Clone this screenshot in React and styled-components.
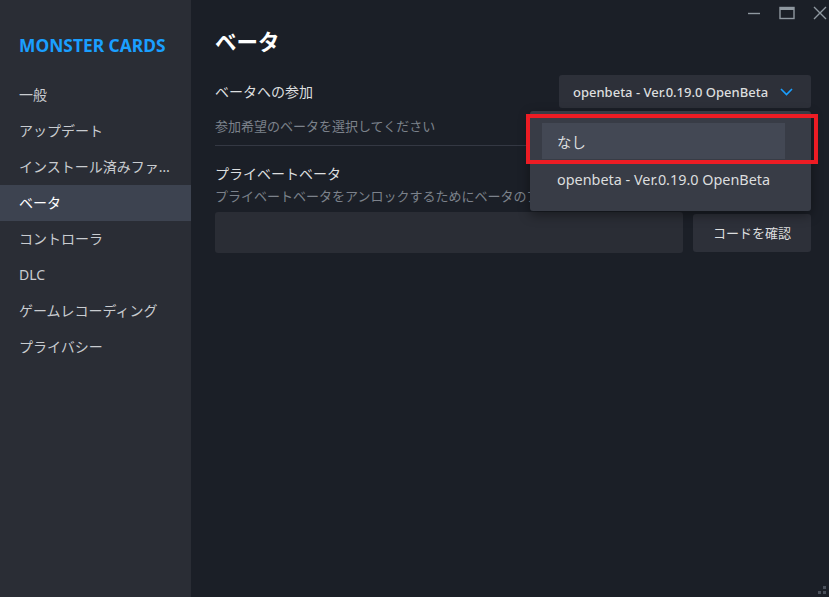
import styled, { createGlobalStyle } from "styled-components";

const GlobalStyle = createGlobalStyle`
  html, body { margin: 0; padding: 0; background: #1b1f27; }
  body {
    font-family: "Noto Sans", "Noto Sans CJK JP", sans-serif;
    -webkit-font-smoothing: antialiased;
  }
`;

const navItems = [
  "一般",
  "アップデート",
  "インストール済みファイル",
  "ベータ",
  "コントローラ",
  "DLC",
  "ゲームレコーディング",
  "プライバシー",
];

const App = () => {
  return (
    <>
      <GlobalStyle />
      <Window>
        <Sidebar>
          <GameTitle>MONSTER CARDS</GameTitle>
          <Nav>
            {navItems.map((item) => (
              <NavItem key={item} $active={item === "ベータ"}>
                {item}
              </NavItem>
            ))}
          </Nav>
        </Sidebar>
        <Main>
          <TitleBar>
            <WinButton aria-label="minimize">
              <svg width="14" height="14" viewBox="0 0 14 14">
                <path d="M1 7.5h12" stroke="#8f98a0" strokeWidth="1.4" />
              </svg>
            </WinButton>
            <WinButton aria-label="maximize">
              <svg width="16" height="14" viewBox="0 0 16 14">
                <rect x="1" y="1.5" width="14" height="11" fill="none" stroke="#8f98a0" strokeWidth="1.4" />
                <path d="M1 3h14" stroke="#8f98a0" strokeWidth="2" />
              </svg>
            </WinButton>
            <WinButton aria-label="close">
              <svg width="14" height="14" viewBox="0 0 14 14">
                <path d="M1 1l12 12M13 1L1 13" stroke="#8f98a0" strokeWidth="1.4" />
              </svg>
            </WinButton>
          </TitleBar>
          <Content>
            <Heading>ベータ</Heading>
            <Section>
              <FieldRow>
                <Label>ベータへの参加</Label>
                <DropdownWrap>
                  <DropdownButton>
                    <span>openbeta - Ver.0.19.0 OpenBeta</span>
                    <svg width="13" height="8" viewBox="0 0 13 8">
                      <path d="M1 1l5.5 5.5L12 1" fill="none" stroke="#1a9fff" strokeWidth="1.6" />
                    </svg>
                  </DropdownButton>
                  <Menu>
                    <MenuItem $highlight>なし</MenuItem>
                    <MenuItem>openbeta - Ver.0.19.0 OpenBeta</MenuItem>
                    <Callout />
                  </Menu>
                </DropdownWrap>
              </FieldRow>
              <Description>参加希望のベータを選択してください</Description>
            </Section>
            <PrivateBlock>
              <Label>プライベートベータ</Label>
              <SubText>プライベートベータをアンロックするためにベータのアクセスコードを入力してください</SubText>
              <CodeRow>
                <CodeInput />
                <ConfirmButton>コードを確認</ConfirmButton>
              </CodeRow>
            </PrivateBlock>
          </Content>
          <Grip>
            <svg width="10" height="10" viewBox="0 0 10 10">
              <rect x="6" y="1" width="3" height="3" fill="#4b515c" />
              <rect x="1" y="6" width="3" height="3" fill="#4b515c" />
              <rect x="6" y="6" width="3" height="3" fill="#4b515c" />
            </svg>
          </Grip>
        </Main>
      </Window>
    </>
  );
};

export default App;

const Window = styled.div`
  display: flex;
  width: 829px;
  height: 597px;
  overflow: hidden;
`;

const Sidebar = styled.aside`
  width: 191px;
  flex-shrink: 0;
  background: #2a2d35;
  padding-top: 34px;
  box-sizing: border-box;
`;

const GameTitle = styled.div`
  padding-left: 19px;
  font-size: 17.4px;
  line-height: 22px;
  font-weight: 700;
  color: #1a9fff;
`;

const Nav = styled.nav`
  margin-top: 21px;
  display: flex;
  flex-direction: column;
`;

const NavItem = styled.div`
  height: 36px;
  line-height: 36px;
  padding: 0 10px 0 19px;
  font-size: 14px;
  color: ${(p) => (p.$active ? "#ffffff" : "#c9ccd0")};
  background: ${(p) => (p.$active ? "#3d4350" : "transparent")};
  white-space: nowrap;
  overflow: hidden;
  text-overflow: ellipsis;
`;

const Main = styled.main`
  position: relative;
  flex: 1;
  background: #1b1f27;
  display: flex;
  flex-direction: column;
`;

const TitleBar = styled.div`
  height: 28px;
  display: flex;
  justify-content: flex-end;
  align-items: center;
  gap: 18px;
  padding-right: 2px;
`;

const WinButton = styled.div`
  height: 28px;
  display: flex;
  align-items: center;
  justify-content: center;
  margin-top: -2px;
`;

const Content = styled.div`
  padding: 0 18px 0 24px;
  display: flex;
  flex-direction: column;
`;

const Heading = styled.h1`
  margin: 0;
  font-size: 21.5px;
  line-height: 28px;
  font-weight: 700;
  color: #ffffff;
`;

const Section = styled.section`
  margin-top: 19px;
  border-bottom: 1px solid #343843;
  padding-bottom: 10px;
`;

const FieldRow = styled.div`
  display: flex;
  justify-content: space-between;
  align-items: center;
`;

const Label = styled.div`
  font-size: 14px;
  line-height: 20px;
  color: #dcdedf;
`;

const Description = styled.div`
  margin-top: 9px;
  font-size: 13px;
  line-height: 18px;
  color: #7c828b;
`;

const DropdownWrap = styled.div`
  position: relative;
`;

const DropdownButton = styled.div`
  width: 252px;
  height: 33px;
  box-sizing: border-box;
  background: #2d3039;
  border-radius: 3px;
  display: flex;
  align-items: center;
  justify-content: space-between;
  padding: 0 18px 0 14px;
  font-size: 13px;
  font-weight: 500;
  color: #dcdedf;
`;

const Menu = styled.div`
  position: absolute;
  top: calc(100% + 3px);
  right: 0;
  width: 281px;
  box-sizing: border-box;
  padding: 12px 26px 12px 12px;
  background: #383c46;
  border-radius: 3px;
  box-shadow: 0 4px 12px rgba(0, 0, 0, 0.4);
  z-index: 2;
`;

const MenuItem = styled.div`
  height: ${(p) => (p.$highlight ? "36px" : "40px")};
  display: flex;
  align-items: center;
  padding-left: 15px;
  font-size: 14.4px;
  color: #dcdedf;
  background: ${(p) => (p.$highlight ? "#434854" : "transparent")};
  white-space: nowrap;
`;

const Callout = styled.div`
  position: absolute;
  left: -4px;
  top: 3px;
  width: 292px;
  height: 50px;
  box-sizing: border-box;
  border: 4px solid #ed1c24;
`;

const PrivateBlock = styled.section`
  margin-top: 18px;
  display: flex;
  flex-direction: column;
`;

const SubText = styled.div`
  margin-top: 2px;
  font-size: 13px;
  line-height: 20px;
  color: #7c828b;
  white-space: nowrap;
  overflow: hidden;
`;

const CodeRow = styled.div`
  margin-top: 6px;
  display: flex;
  align-items: center;
  gap: 10px;
`;

const CodeInput = styled.div`
  flex: 1;
  height: 41px;
  background: #2a2d35;
  border-radius: 3px;
`;

const ConfirmButton = styled.div`
  width: 118px;
  height: 38px;
  display: flex;
  align-items: center;
  justify-content: center;
  background: #2d3039;
  border-radius: 3px;
  font-size: 13px;
  color: #dcdedf;
`;

const Grip = styled.div`
  position: absolute;
  right: 2px;
  bottom: 2px;
  width: 10px;
  height: 10px;
  display: flex;
`;
